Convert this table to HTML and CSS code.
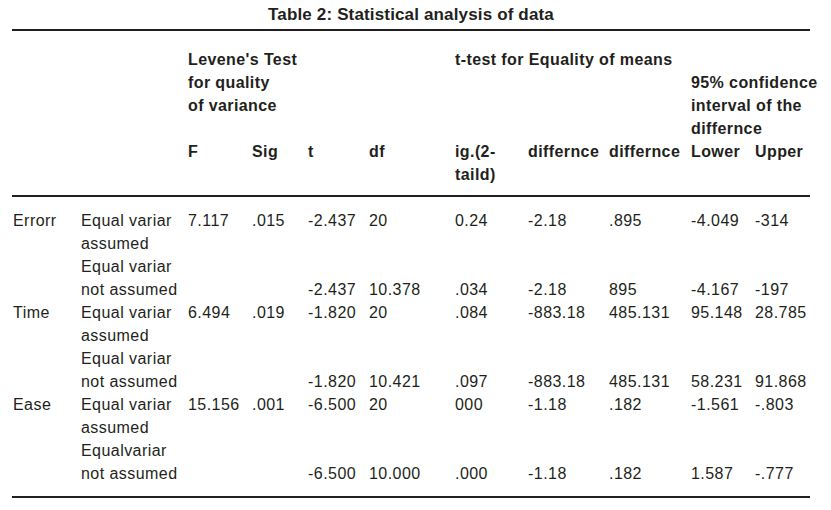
FILE: index.html
```html
<!DOCTYPE html>
<html>
<head>
<meta charset="utf-8">
<link rel="stylesheet" href="styles.css">
</head>
<body>
<div class="page">
  <div class="title">Table 2: Statistical analysis of data</div>
  <table class="stats">
    <colgroup>
      <col class="c1"><col class="c2"><col class="c3"><col class="c4"><col class="c5"><col class="c6"><col class="c7"><col class="c8"><col class="c9"><col class="c10"><col class="c11">
    </colgroup>
    <thead>
      <tr class="h1">
        <th colspan="2"></th>
        <th colspan="2" rowspan="2">Levene's Test<br>for quality<br>of variance</th>
        <th colspan="2"></th>
        <th colspan="5">t-test for Equality of means</th>
      </tr>
      <tr class="h2">
        <th colspan="2"></th>
        <th colspan="2"></th>
        <th colspan="3"></th>
        <th colspan="2">95% confidence<br>interval of the<br>differnce</th>
      </tr>
      <tr class="h3">
        <th></th><th></th>
        <th>F</th><th>Sig</th><th>t</th><th>df</th>
        <th>ig.(2-<br>taild)</th>
        <th>differnce</th><th>differnce</th><th>Lower</th><th>Upper</th>
      </tr>
    </thead>
    <tbody>
      <tr class="first">
        <td>Errorr</td><td>Equal variar<br>assumed</td>
        <td>7.117</td><td>.015</td><td>-2.437</td><td>20</td><td>0.24</td><td>-2.18</td><td>.895</td><td>-4.049</td><td>-314</td>
      </tr>
      <tr class="low">
        <td></td><td>Equal variar<br>not assumed</td>
        <td></td><td></td><td>-2.437</td><td>10.378</td><td>.034</td><td>-2.18</td><td>895</td><td>-4.167</td><td>-197</td>
      </tr>
      <tr>
        <td>Time</td><td>Equal variar<br>assumed</td>
        <td>6.494</td><td>.019</td><td>-1.820</td><td>20</td><td>.084</td><td>-883.18</td><td>485.131</td><td>95.148</td><td>28.785</td>
      </tr>
      <tr class="low">
        <td></td><td>Equal variar<br>not assumed</td>
        <td></td><td></td><td>-1.820</td><td>10.421</td><td>.097</td><td>-883.18</td><td>485.131</td><td>58.231</td><td>91.868</td>
      </tr>
      <tr>
        <td>Ease</td><td>Equal variar<br>assumed</td>
        <td>15.156</td><td>.001</td><td>-6.500</td><td>20</td><td>000</td><td>-1.18</td><td>.182</td><td>-1.561</td><td>-.803</td>
      </tr>
      <tr class="low last">
        <td></td><td>Equalvariar<br>not assumed</td>
        <td></td><td></td><td>-6.500</td><td>10.000</td><td>.000</td><td>-1.18</td><td>.182</td><td>1.587</td><td>-.777</td>
      </tr>
    </tbody>
  </table>
</div>
</body>
</html>
```

FILE: styles.css
```css
html, body {
  margin: 0;
  padding: 0;
  background: #ffffff;
}
body {
  font-family: "Liberation Sans", Arial, Helvetica, sans-serif;
  color: #231f20;
}
.page {
  width: 798px;
  padding-left: 12px;
}
.title {
  font-weight: bold;
  font-size: 17px;
  letter-spacing: 0.15px;
  line-height: 23px;
  padding-top: 3px;
  margin-bottom: 3px;
  text-align: center;
}
.stats {
  width: 798px;
  table-layout: fixed;
  border-collapse: separate;
  border-spacing: 0;
  border-top: 2px solid #231f20;
  border-bottom: 2px solid #231f20;
  font-size: 16px;
  line-height: 23px;
  letter-spacing: 0.45px;
}
.c1 { width: 68px; }
.c2 { width: 107px; }
.c3 { width: 64px; }
.c4 { width: 56px; }
.c5 { width: 61px; }
.c6 { width: 86px; }
.c7 { width: 73px; }
.c8 { width: 81px; }
.c9 { width: 82px; }
.c10 { width: 64px; }
.c11 { width: 56px; }
.stats th, .stats td {
  padding: 0 0 0 1px;
  text-align: left;
  vertical-align: top;
  white-space: nowrap;
}
.stats th {
  font-weight: bold;
  letter-spacing: 0.4px;
}
.stats .h1 th {
  padding-top: 17px;
}
.stats .h3 th {
  padding-bottom: 9px;
  border-bottom: 2px solid #231f20;
}
.stats tbody td {
  height: 46px;
}
.stats .first td {
  padding-top: 12px;
}
.stats .low td {
  vertical-align: bottom;
}
.stats .last td {
  padding-bottom: 11px;
}
```
